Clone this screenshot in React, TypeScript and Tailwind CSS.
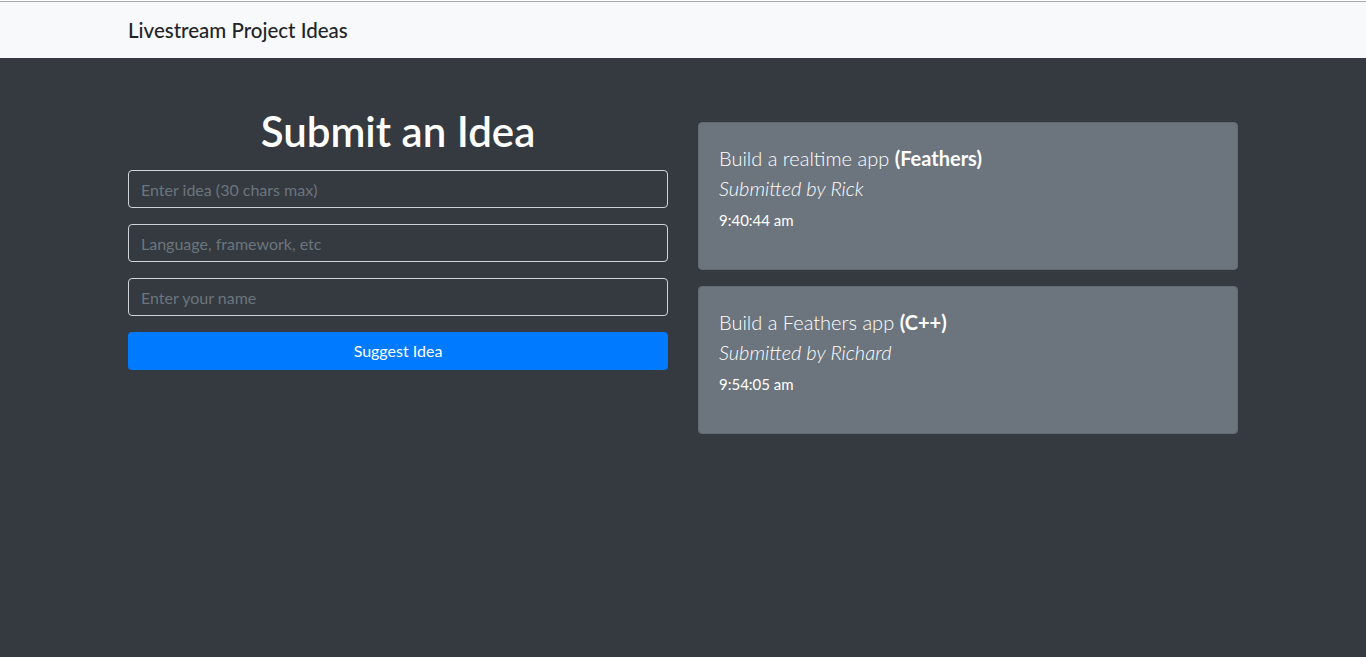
import React from "react";

const ideas = [
  { idea: "Build a realtime app", tech: "Feathers", name: "Rick", time: "9:40:44 am" },
  { idea: "Build a Feathers app", tech: "C++", name: "Richard", time: "9:54:05 am" },
];

export default function App() {
  return (
    <div className="min-h-[657px] flex flex-col bg-[#343a40] font-['Lato',sans-serif]">
      <div className="h-px bg-white" />
      <div className="h-px bg-[#a6a6a6]" />
      <nav className="h-[56px] bg-[#f8f9fa] flex items-center">
        <div className="w-[1110px] mx-auto">
          <span className="text-[20.5px] leading-[30px] text-[#212529] font-medium">Livestream Project Ideas</span>
        </div>
      </nav>
      <main className="w-[1110px] mx-auto mt-[48px] flex gap-[30px]">
        <section className="w-[540px] flex flex-col">
          <h1 className="text-center text-white text-[42px] leading-[50px] font-semibold mb-[14px]">Submit an Idea</h1>
          <form className="flex flex-col gap-4" onSubmit={(e) => e.preventDefault()}>
            <input
              className="h-[38px] w-full rounded border border-[#ced4da] bg-transparent px-3 text-[16px] text-white placeholder:text-[#6c757d] outline-none"
              placeholder="Enter idea (30 chars max)"
            />
            <input
              className="h-[38px] w-full rounded border border-[#ced4da] bg-transparent px-3 text-[16px] text-white placeholder:text-[#6c757d] outline-none"
              placeholder="Language, framework, etc"
            />
            <input
              className="h-[38px] w-full rounded border border-[#ced4da] bg-transparent px-3 text-[16px] text-white placeholder:text-[#6c757d] outline-none"
              placeholder="Enter your name"
            />
            <button className="h-[38px] w-full rounded bg-[#007bff] text-white text-[16px]" type="submit">
              Suggest Idea
            </button>
          </form>
        </section>
        <section className="w-[540px] flex flex-col gap-4 pt-4">
          {ideas.map((it) => (
            <div key={it.time} className="h-[148px] rounded bg-[#6c757d] border border-[#646b72] px-5 pt-5 text-white">
              <p className="text-[20px] leading-[30px] font-light">
                {it.idea} <strong className="font-bold">({it.tech})</strong>
              </p>
              <p className="text-[20px] leading-[30px] font-light italic">Submitted by {it.name}</p>
              <p className="text-[15px] leading-[24px] mt-[5px] font-normal">{it.time}</p>
            </div>
          ))}
        </section>
      </main>
    </div>
  );
}
